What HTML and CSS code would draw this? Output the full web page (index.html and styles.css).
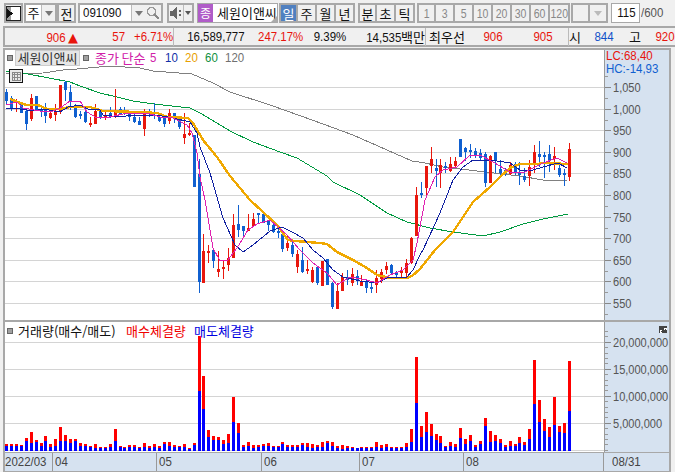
FILE: index.html
```html
<html lang="ko">
<head>
    <meta charset="UTF-8">
    <meta name="viewport" content="width=device-width, initial-scale=1.0">
    <title>세원이앤씨 차트</title>
    <link rel="stylesheet" href="styles.css">
</head>
<body>
    <div id="toolbar">
        <div class="btn btn-layout">
            <svg width="15" height="15" viewBox="0 0 15 15">
                <rect x="0.5" y="0.5" width="14" height="14" fill="#fff" stroke="#222"/>
                <rect x="1" y="1" width="4" height="13" fill="#9a9a9a"/>
                <path d="M1 3 L7 7.5 L1 12 Z" fill="#111"/>
            </svg>
        </div>
        <div class="combo combo-period">
            <span class="combo-text">주</span>
            <span class="caret-box"><i class="caret"></i></span>
        </div>
        <div class="btn">전</div>
        <div class="combo combo-code">
            <span class="combo-text code-text"><span class="dl">091090</span></span>
            <span class="caret-box"><i class="caret"></i></span>
            <span class="search-box">
                <svg width="14" height="14" viewBox="0 0 14 14">
                    <circle cx="5.5" cy="5.5" r="4" fill="none" stroke="#999" stroke-width="1.6"/>
                    <path d="M8.5 8.5 L13 13" stroke="#888" stroke-width="2"/>
                </svg>
            </span>
        </div>
        <div class="combo combo-sound">
            <span class="sound-box">
                <svg width="13" height="12" viewBox="0 0 13 12">
                    <path d="M0 3.5 H3 L7 0 V12 L3 8.5 H0 Z" fill="#666"/>
                    <rect x="9" y="3" width="2" height="2" fill="#666"/>
                    <rect x="9" y="7" width="2" height="2" fill="#666"/>
                </svg>
            </span>
            <span class="caret-box"><i class="caret caret-dark"></i></span>
        </div>
        <div class="name-box">
            <span class="name-badge">종</span>
            <span class="name-text">세원이앤씨</span>
            <i class="name-corner"></i>
        </div>
        <div class="seg seg-period">
            <div class="btn active">일</div>
            <div class="btn">주</div>
            <div class="btn">월</div>
            <div class="btn">년</div>
        </div>
        <div class="seg seg-time">
            <div class="btn">분</div>
            <div class="btn">초</div>
            <div class="btn">틱</div>
        </div>
        <div class="seg seg-num">
            <div class="btn num"><span>1</span></div>
            <div class="btn num"><span>3</span></div>
            <div class="btn num"><span>5</span></div>
            <div class="btn num"><span>10</span></div>
            <div class="btn num"><span>20</span></div>
            <div class="btn num"><span>30</span></div>
            <div class="btn num"><span>60</span></div>
            <div class="btn num wide"><span>120</span></div>
        </div>
        <div class="btn btn-blank"></div>
        <div class="btn btn-drop"><i class="caret caret-light"></i></div>
        <div class="count-box"><span class="d">115</span></div>
        <div class="count-total"><span class="dl">/600</span></div>
    </div>

    <div id="quote">
        <div class="up"><span class="d">906</span> <span class="arrow">▲</span></div>
        <div class="up"><span class="d">57</span></div>
        <div class="up"><span class="d">+6.71%</span></div>
        <div class="sep"><span class="d">16,589,777</span></div>
        <div class="up"><span class="d">247.17%</span></div>
        <div><span class="d">9.39%</span></div>
        <div><span class="d">14,535</span>백만</div>
        <div class="sep">최우선</div>
        <div class="up"><span class="d">906</span></div>
        <div class="up pad-right"><span class="d">905</span></div>
        <div class="sep">시</div>
        <div class="down"><span class="d">844</span></div>
        <div>고</div>
        <div class="up"><span class="d">920</span></div>
    </div>

    <div id="chart">
        <div class="row row-price">
            <div class="pane">
                <svg id="price-svg" width="599" height="270" viewBox="5 50 599 270"></svg>
                <div class="legend">
                    <i class="dot"></i>
                    <span class="legend-name">세원이앤씨</span>
                    <i class="dot"></i>
                    <span class="ma5 legend-title">종가 단순</span>
                    <span class="ma5 ma-num first">5</span>
                    <span class="ma10 ma-num">10</span>
                    <span class="ma20 ma-num">20</span>
                    <span class="ma60 ma-num">60</span>
                    <span class="ma120 ma-num">120</span>
                </div>
                <div class="grid-icon">
                    <svg width="14" height="14" viewBox="0 0 14 14">
                        <rect x="0.5" y="0.5" width="13" height="13" fill="#e8e8e8" stroke="#111"/>
                        <path d="M3 3 H11 V11 H3 Z M3 5.5 H11 M3 8 H11 M5.5 3 V11 M8 3 V11" fill="none" stroke="#888"/>
                    </svg>
                </div>
            </div>
            <div class="axis">
                <svg id="price-axis" width="64" height="270" viewBox="605 50 64 270"></svg>
                <div class="ratio">
                    <div class="ratio-low">LC:68,40</div>
                    <div class="ratio-high">HC:-14,93</div>
                </div>
            </div>
        </div>
        <div class="row row-volume">
            <div class="pane">
                <svg id="volume-svg" width="599" height="130" viewBox="5 322 599 130"></svg>
                <div class="legend legend-volume">
                    <i class="dot"></i>
                    <span class="legend-black">거래량(매수/매도)</span>
                    <span class="buy">매수체결량</span>
                    <span class="sell">매도체결량</span>
                </div>
            </div>
            <div class="axis">
                <svg id="volume-axis" width="64" height="130" viewBox="605 322 64 130"></svg>
                <div class="expand-icon">
                    <svg width="8" height="6" viewBox="0 0 8 6">
                        <path d="M1 5 L3 3 M5 3 L7 1 M5 1 H7 V3 M1 3 V5 H3" fill="none" stroke="#fff"/>
                    </svg>
                </div>
            </div>
        </div>
        <div class="row-time">
            <div class="t-first"><span class="dl">2022/03</span></div>
            <div class="t-apr"><span class="dl">04</span></div>
            <div class="t-may"><span class="dl">05</span></div>
            <div class="t-jun"><span class="dl">06</span></div>
            <div class="t-jul"><span class="dl">07</span></div>
            <div class="t-aug"><span class="dl">08</span></div>
            <div class="t-last"><span class="dl">08/31</span></div>
        </div>
    </div>
    <script src="chart.js"></script>
</body>
</html>
```

FILE: styles.css
```css
* {
    box-sizing: border-box;
}

html, body {
    margin: 0;
    padding: 0;
}

body {
    width: 675px;
    height: 472px;
    overflow: hidden;
    background: #f0f0f0;
    font-family: "Liberation Sans", "Noto Sans CJK KR", sans-serif;
    font-size: 13px;
    color: #111;
}

svg {
    display: block;
    shape-rendering: crispEdges;
}

/* digits in the screenshot are tall and narrow */
.d, .dl {
    display: inline-block;
    font-family: "Liberation Sans", sans-serif;
    font-size: 13.5px;
    transform: scaleX(0.85);
    white-space: nowrap;
}

.d {
    transform-origin: right;
}

.dl {
    transform-origin: left;
}

#toolbar {
    display: flex;
    height: 20px;
    margin-top: 3px;
    padding-left: 4px;
}

.btn {
    display: flex;
    align-items: center;
    justify-content: center;
    width: 19px;
    height: 20px;
    background: #f0f0f0;
    border: 2px solid #a8a8a8;
    font-size: 13px;
    font-family: "Noto Sans CJK KR", sans-serif;
}

.combo {
    display: flex;
    height: 20px;
    border: 2px solid #a8a8a8;
    background: #f0f0f0;
}

.combo-period {
    width: 33px;
    margin-left: 1px;
}

.combo-text {
    flex: 1;
    background: #fff;
    text-align: center;
    line-height: 15px;
    font-size: 13px;
    font-family: "Noto Sans CJK KR", sans-serif;
}

.code-text {
    line-height: 16px;
    text-align: left;
    padding-left: 3px;
}

.caret-box {
    display: flex;
    align-items: center;
    justify-content: center;
    width: 14px;
    border-left: 1px solid #bbb;
}

.caret {
    display: block;
    border-left: 4px solid transparent;
    border-right: 4px solid transparent;
    border-top: 5px solid #777;
}

.caret-dark {
    border-left-width: 3px;
    border-right-width: 3px;
    border-top-width: 4px;
    border-top-color: #555;
}

.caret-light {
    border-top-color: #bbb;
}

.combo-code {
    width: 85px;
    margin-left: 2px;
}

.search-box {
    display: flex;
    align-items: center;
    justify-content: center;
    width: 16px;
}

.combo-sound {
    width: 27px;
    margin-left: 4px;
}

.sound-box {
    display: flex;
    align-items: center;
    justify-content: center;
    flex: 1;
}

.combo-sound .caret-box {
    width: 9px;
}

.name-box {
    position: relative;
    display: flex;
    width: 81px;
    height: 20px;
    margin-left: 3px;
    background: #fff;
    border: 1px solid #a8a8a8;
    font-family: "Noto Sans CJK KR", sans-serif;
}

.name-badge {
    width: 15px;
    background: #b05cc8;
    color: #fff;
    text-align: center;
    font-size: 12px;
    line-height: 18px;
}

.name-text {
    padding-left: 4px;
    font-size: 13px;
    line-height: 18px;
    white-space: nowrap;
}

.name-corner {
    position: absolute;
    right: 0;
    bottom: 0;
    border-left: 6px solid transparent;
    border-bottom: 6px solid #aaa;
}

.seg {
    display: flex;
}

.seg .btn + .btn {
    border-left: 0;
}

.seg-period {
    margin-left: 1px;
}

.seg-time {
    margin-left: 3px;
}

.seg-num {
    margin-left: 2px;
}

.active {
    background: #5080c0;
    color: #fff;
}

.num {
    color: #888;
}

.num span {
    display: inline-block;
    font-family: "Liberation Sans", sans-serif;
    font-size: 13.5px;
    transform: scaleX(0.78);
}

.wide {
    width: 20px;
}

.btn-blank {
    margin-left: 1px;
}

.btn-drop {
    width: 18px;
    border-left: 0;
}

.count-box {
    width: 29px;
    height: 20px;
    margin-left: 3px;
    padding-right: 3px;
    background: #fff;
    border: 1px solid #a8a8a8;
    text-align: right;
    line-height: 18px;
}

.count-total {
    margin-left: 1px;
    color: #555;
    line-height: 20px;
}

#quote {
    display: grid;
    grid-template-columns: 73px 47px 48px 72px 58px 43px 79px 40px 38px 65px 12px 34px 27px 34px;
    height: 21px;
    margin-top: 3px;
    margin-left: 3px;
    border: 2px solid #a8a8a8;
    border-right: 0;
    line-height: 17px;
    white-space: nowrap;
    font-family: "Noto Sans CJK KR", sans-serif;
}

#quote div {
    text-align: right;
}

#quote .sep {
    border-left: 1px solid #bbb;
}

#quote .pad-right {
    padding-right: 15px;
}

.up {
    color: #e8140c;
}

.down {
    color: #1050c8;
}

.arrow {
    font-size: 13px;
    line-height: 10px;
    font-family: "DejaVu Sans", sans-serif;
}

#chart {
    width: 668px;
    height: 424px;
    margin-top: 1px;
    margin-left: 3px;
    border: 2px solid #a8a8a8;
    background: #fff;
}

.row {
    display: flex;
}

.row-price {
    height: 272px;
    border-bottom: 2px solid #a8a8a8;
}

.row-volume {
    height: 131px;
    border-bottom: 1px solid #a8a8a8;
}

.pane {
    position: relative;
    width: 599px;
}

.axis {
    position: relative;
    flex: 1;
    background: #d6e2f0;
    border-left: 1px solid #999;
}

.legend {
    position: absolute;
    left: 2px;
    top: 1px;
    display: flex;
    align-items: center;
    height: 14px;
    font-family: "Noto Sans CJK KR", sans-serif;
    font-size: 13px;
    line-height: 14px;
    white-space: nowrap;
}

.dot {
    display: block;
    width: 6px;
    height: 6px;
    background: #a0a0a0;
    border: 1px solid #666;
}

.legend-name {
    width: 65px;
    margin: 0 3px 0 2px;
    background: #e6e6e6;
    border: 1px solid #ccc;
    text-align: center;
    color: #333;
}

.legend-title {
    width: 55px;
    margin-left: 6px;
    word-spacing: -1px;
}

.ma-num {
    width: 20px;
    font-family: "Liberation Sans", sans-serif;
    font-size: 13.5px;
    transform: scaleX(0.85);
    transform-origin: left;
}

.first {
    width: 15px;
}

.ma5 {
    color: #d020a8;
}

.ma10 {
    color: #1030a8;
}

.ma20 {
    color: #e8a000;
}

.ma60 {
    color: #109040;
}

.ma120 {
    color: #707070;
}

.grid-icon {
    position: absolute;
    left: 4px;
    top: 19px;
}

.ratio {
    position: absolute;
    left: 1px;
    top: 0;
    font-family: "Liberation Sans", sans-serif;
    font-size: 12.5px;
    line-height: 13px;
    white-space: nowrap;
    transform: scaleX(0.92);
    transform-origin: left;
}

.ratio-low {
    color: #e8140c;
}

.ratio-high {
    color: #1060d0;
}

.legend-volume {
    top: 2px;
}

.legend-black {
    margin-left: 5px;
    width: 108px;
}

.buy {
    color: #f00000;
    width: 68px;
}

.sell {
    color: #0000e0;
}

.expand-icon {
    position: absolute;
    right: 2px;
    top: 4px;
    display: flex;
    align-items: center;
    justify-content: center;
    width: 8px;
    height: 7px;
    background: #444;
}

.row-time {
    display: flex;
    height: 18px;
    background: #d6e2f0;
    color: #444;
    line-height: 17px;
}

.row-time div {
    padding-left: 2px;
    border-right: 1px solid #999;
}

.row-time .t-first {
    width: 48px;
    padding-left: 0;
}

.t-apr {
    width: 104px;
}

.t-may {
    width: 105px;
}

.t-jun {
    width: 98px;
}

.t-jul {
    width: 104px;
}

.t-aug {
    width: 140px;
}

.row-time .t-last {
    flex: 1;
    padding-left: 8px;
    border-right: 0;
}
```

FILE: chart.js
```js
const SVG_NS = "http://www.w3.org/2000/svg";

// [wick top, wick bottom, body top, body bottom, red?] - y is px * 3 from baseY
const candlesA = [
    [57,105,67,92,0],[78,122,85,118,0],[88,125,93,100,1],[97,128,102,128,0],[118,180,122,163,0],
    [72,152,85,147,1],[78,122,78,120,0],[105,140,118,125,0],[100,158,112,138,0],[126,147,130,144,1],
    [102,152,122,135,1],[45,132,45,122,1],[33,92,35,60,0],[45,120,67,95,0],[103,143,110,140,0],
    [123,147,132,137,0],[112,160,125,155,0],[140,170,159,165,1],[102,162,124,162,1],[117,148,117,145,0],
    [122,150,139,142,1],[112,145,130,142,0],[57,145,120,140,1],[112,135,118,132,0],[112,135,125,130,0],
    [125,152,125,142,0],[133,160,140,156,0],[140,165,153,165,0],[118,198,130,177,1],[118,140,125,130,0],
    [100,148,127,130,0],[128,155,140,152,0],[135,170,140,162,0],[118,162,130,152,1],[130,160,130,145,0],
    [140,178,148,170,0],[130,222,192,204,1],[160,197,189,194,1],[195,350,195,350,0],[268,668,312,635,0],
    [492,638,544,638,1],[526,578,543,546,1],[535,594,540,572,0],[544,620,597,605,1],[570,626,591,596,1]
];
const candlesB = [
    [385,452,415,435,1],[282,414,315,414,1],[255,350,312,330,0],[318,350,318,332,0],[282,332,324,332,1],
    [280,320,297,317,1],[278,312,280,285,0],[275,310,282,308,0],[300,333,303,315,0],[310,340,316,336,0],
    [322,353,333,338,0],[340,395,342,386,0],[348,393,370,384,1],[360,412,375,402,0],[390,458,402,440,1],
    [380,460,420,456,0],[420,463,447,452,1],[440,488,450,486,1],[438,494,442,488,0],[422,497,424,497,1],
    [418,495,418,495,0],[487,566,490,562,0],[490,566,512,566,1],[458,512,470,512,1],[450,495,473,478,0],
    [445,497,462,490,1],[450,495,468,482,0],[465,498,485,498,1],[478,518,486,504,0],[487,518,502,506,0],
    [450,518,474,494,1],[447,490,456,476,1],[427,462,438,450,1],[432,462,435,459,0],[452,470,460,462,0],
    [442,472,454,460,1],[418,470,430,458,1],[350,432,353,430,1],[202,347,225,347,1],[185,235,220,226,0],
    [138,232,138,203,1],[82,160,117,137,1],[118,202,144,152,0],[118,203,135,160,1],[125,160,138,144,0],
    [112,155,132,152,1],[112,143,124,138,1],[57,112,57,110,0],[80,122,85,95,0],[72,115,90,95,0],
    [83,115,93,104,0],[88,120,100,113,0],[95,200,102,188,0],[105,190,108,188,1],[95,160,97,120,0],
    [120,172,148,160,0],[143,168,150,163,0],[125,165,135,163,1],[125,165,132,155,0],[125,195,157,165,0],
    [145,187,168,180,0],[120,198,140,168,1],[75,158,96,133,1],[63,140,102,110,0],[95,175,105,110,0],
    [75,155,103,122,0],[82,150,108,118,1],[125,170,144,165,0],[148,197,160,165,0],[70,182,88,170,1]
];

// [top of red, top of blue] - y is px * 3 from 320
const volumes = [
    [372,377],[372,377],[372,377],[375,377],[354,363],[336,369],[360,365],[369,377],[348,363],[372,381],
    [357,378],[321,363],[345,363],[357,369],[357,363],[369,377],[372,377],[378,381],[372,384],[381,384],
    [381,384],[372,381],[327,363],[378,381],[381,384],[375,381],[375,381],[381,384],[369,381],[378,384],
    [372,381],[378,384],[366,372],[366,377],[375,381],[378,381],[372,381],[384,387],[369,375],[48,213],
    [168,267],[330,351],[348,360],[351,360],[360,372],[342,369],[231,306],[309,339],[375,381],[366,378],
    [375,384],[375,381],[372,377],[369,377],[378,381],[378,381],[366,372],[375,381],[375,381],[375,381],
    [369,375],[369,381],[372,384],[375,381],[366,381],[363,369],[366,377],[378,384],[375,387],[378,384],
    [381,384],[384,384],[381,384],[381,384],[381,384],[366,381],[375,384],[372,381],[381,384],[381,384],
    [381,384],[369,381],[327,366],[111,249],[318,351],[276,336],[312,348],[342,360],[348,369],[378,381],
    [366,378],[372,381],[324,354],[357,372],[345,363],[375,381],[363,372],[294,318],[333,366],[345,363],
    [357,369],[375,381],[363,378],[372,378],[351,369],[366,375],[327,357],[120,252],[240,306],[297,333],
    [321,351],[231,315],[318,336],[309,339],[123,273]
];

const ma5 = "6,105 17,102 23,108 40,111 53,111 60,108 70,101 80,101 87,112 97,118 110,117 127,113 147,113 160,117 173,118 187,125 192,133 197,153 200,177 205,200 213,248 220,261 228,260 237,248 248,230 257,224 270,220 287,235 300,250 313,263 327,273 337,285 350,277 367,280 377,283 390,275 403,270 413,260 417,243 425,200 435,177 443,170 457,167 470,155 480,155 493,162 510,172 523,173 543,163 557,158 567,163";
const ma10 = "6,108 20,109 33,111 43,109 60,112 68,107 80,105 88,109 100,110 103,115 120,117 133,115 157,115 173,118 190,122 197,133 200,147 210,173 217,197 223,218 227,227 235,245 243,252 253,245 270,231 282,227 292,232 303,238 313,250 323,258 333,270 343,277 360,281 377,283 387,278 407,277 413,270 420,255 423,250 440,213 453,180 463,167 473,160 483,160 497,161 510,163 520,170 533,170 543,167 558,163 567,168";
const ma20 = "10,99 20,103 27,105 38,105 47,109 60,109 70,107 90,107 103,111 140,112 157,113 167,117 188,118 193,123 203,140 217,157 230,176 240,188 250,200 263,212 277,225 288,240 295,241 320,243 327,244 337,252 343,255 353,260 367,268 377,275 390,278 407,278 412,276 420,269 435,250 453,232 473,202 490,187 500,177 510,168 520,164 525,164 537,164 543,163 568,164";
const ma60 = "6,71 28,74 70,82 80,86 100,93 117,97 133,101 147,103 163,105 190,108 200,113 217,123 230,131 253,142 280,152 297,158 327,176 333,182 360,195 387,213 407,222 430,228 453,232 483,236 500,232 523,224 543,219 568,214";
const ma120 = "6,74 43,73 63,70 77,69 110,66 140,68 153,71 192,74 213,83 230,92 270,105 312,120 353,135 387,150 412,161 425,163 443,167 477,171 520,176 543,180 567,181";

function add(parent, tag, attrs, text) {
    let el = document.createElementNS(SVG_NS, tag);
    for (let key in attrs) {
        el.setAttribute(key, attrs[key]);
    }
    if (text) {
        el.textContent = text;
    }
    parent.appendChild(el);
    return el;
}

function barX(i) {
    return Math.floor(6.5 + 4.937 * i);
}

function gridLines(svg, ys) {
    ys.forEach(y => add(svg, "rect", { x: 5, y: y, width: 599, height: 1, fill: "#d4d4d4" }));
}

function drawCandle(svg, i, c, baseY) {
    let color = c[4] ? "#e8170d" : "#1060d0";
    let x = barX(i);
    let wickTop = Math.round(baseY + c[0] / 3);
    let wickBottom = Math.round(baseY + c[1] / 3);
    let bodyTop = Math.round(baseY + c[2] / 3);
    let bodyBottom = Math.round(baseY + c[3] / 3);
    add(svg, "rect", { x: x, y: wickTop, width: 1, height: wickBottom - wickTop, fill: color });
    add(svg, "rect", { x: x - 1, y: bodyTop, width: 3, height: Math.max(bodyBottom - bodyTop, 2), fill: color });
}

function drawLine(svg, points, color, width) {
    add(svg, "polyline", {
        points: points,
        fill: "none",
        stroke: color,
        "stroke-width": width,
        "stroke-linejoin": "round"
    });
}

function drawAxis(svg, majors, minors, labels) {
    minors.forEach(y => add(svg, "rect", { x: 605, y: y, width: 3, height: 1, fill: "#999" }));
    majors.forEach((y, i) => {
        add(svg, "rect", { x: 605, y: y, width: 6, height: 1, fill: "#888" });
        add(svg, "text", {
            transform: "translate(613," + (y + 5) + ") scale(0.85,1)",
            fill: "#555",
            "font-size": 13,
            "font-family": "'Liberation Sans', sans-serif"
        }, labels[i]);
    });
}

function drawPrice() {
    let svg = document.getElementById("price-svg");
    gridLines(svg, [87, 109, 130, 152, 173, 195, 217, 238, 260, 281, 303]);
    drawLine(svg, ma120, "#808080", 1);
    drawLine(svg, ma60, "#009a40", 1);
    candlesA.forEach((c, i) => drawCandle(svg, i, c, 70));
    candlesB.forEach((c, i) => drawCandle(svg, i + candlesA.length, c, 120));
    drawLine(svg, ma20, "#f0a800", 2.4);
    drawLine(svg, ma10, "#1020a0", 1);
    drawLine(svg, ma5, "#e020b0", 1);

    let majors = [87, 109, 130, 152, 173, 195, 217, 238, 260, 281, 303];
    let minors = majors.map(y => y + 11);
    minors.unshift(76);
    let labels = ["1,050", "1,000", "950", "900", "850", "800", "750", "700", "650", "600", "550"];
    drawAxis(document.getElementById("price-axis"), majors, minors, labels);
}

function drawVolume() {
    let svg = document.getElementById("volume-svg");
    gridLines(svg, [342, 369, 396, 423, 450]);
    volumes.forEach((v, i) => {
        let x = barX(i) - 1;
        let red = Math.round(320 + v[0] / 3);
        let blue = Math.round(320 + v[1] / 3);
        add(svg, "rect", { x: x, y: red, width: 3, height: 451 - red, fill: "#ff0000" });
        add(svg, "rect", { x: x, y: blue, width: 3, height: 451 - blue, fill: "#0000ff" });
    });

    let majors = [342, 369, 396, 423];
    let minors = [];
    for (let y = 331; y < 452; y += 5.4) {
        minors.push(Math.round(y));
    }
    let labels = ["20,000,000", "15,000,000", "10,000,000", "5,000,000"];
    drawAxis(document.getElementById("volume-axis"), majors, minors, labels);
}

drawPrice();
drawVolume();
```
